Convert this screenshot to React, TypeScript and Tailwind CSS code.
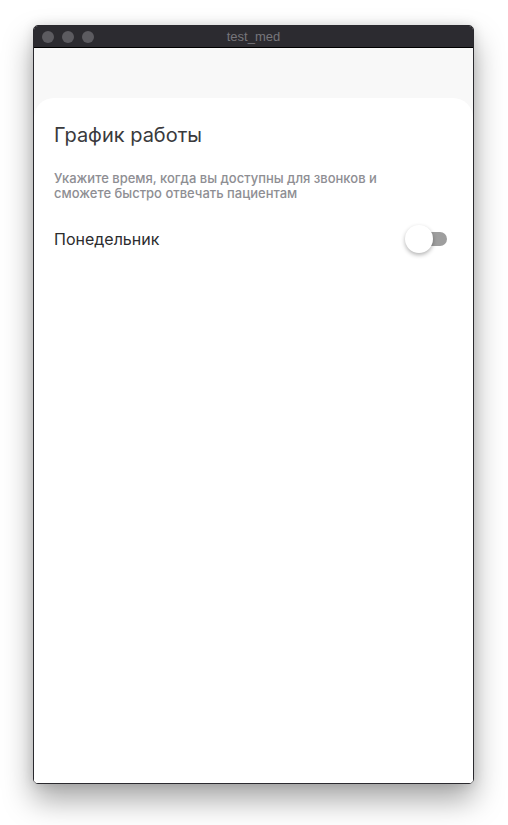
export default function App() {
  return (
    <div className="w-[508px] h-[825px] bg-white relative overflow-hidden" style={{ fontFamily: 'Inter, "Noto Sans", sans-serif' }}>
      <div className="absolute left-[33px] top-[25px] w-[441px] h-[759px] rounded-[5px] border border-[#2a292e] bg-white flex flex-col overflow-hidden shadow-[0_16px_30px_rgba(0,0,0,0.35),0_0_12px_rgba(0,0,0,0.12)]">
        <div className="h-[22px] bg-[#2c2b30] border-b border-black flex items-center relative shrink-0">
          <div className="flex gap-[8px] pl-[8px]">
            <div className="w-[12px] h-[12px] rounded-full bg-[#5c5b60]" />
            <div className="w-[12px] h-[12px] rounded-full bg-[#5c5b60]" />
            <div className="w-[12px] h-[12px] rounded-full bg-[#5c5b60]" />
          </div>
          <div className="absolute inset-0 flex items-center justify-center text-[13px] text-[#77767b]" style={{ fontFamily: '"Liberation Sans", sans-serif' }}>test_med</div>
        </div>
        <div className="flex-1 bg-[#f8f8f8] flex flex-col pt-[50px]">
          <div className="flex-1 bg-white rounded-t-[20px] px-[20px] pt-[24px]">
            <div className="text-[20px] leading-[26px] text-[#3a3a3c]">График работы</div>
            <div className="mt-[23px] text-[13px] leading-[15px] font-medium text-[#8e8e93] w-[360px]">
              Укажите время, когда вы доступны для звонков и сможете быстро отвечать пациентам
            </div>
            <div className="mt-[24px] flex items-center justify-between">
              <div className="text-[16px] leading-[20px] text-[#2c2c2e]">Понедельник</div>
              <div className="relative w-[44px] h-[28px] mr-[6px]">
                <div className="absolute right-0 top-[7px] w-[34px] h-[14px] rounded-full bg-[#9e9e9e]" />
                <div className="absolute left-[2px] top-[0px] w-[28px] h-[28px] rounded-full bg-white shadow-[0_2px_4px_rgba(0,0,0,0.3)]" />
              </div>
            </div>
          </div>
        </div>
      </div>
    </div>
  );
}
